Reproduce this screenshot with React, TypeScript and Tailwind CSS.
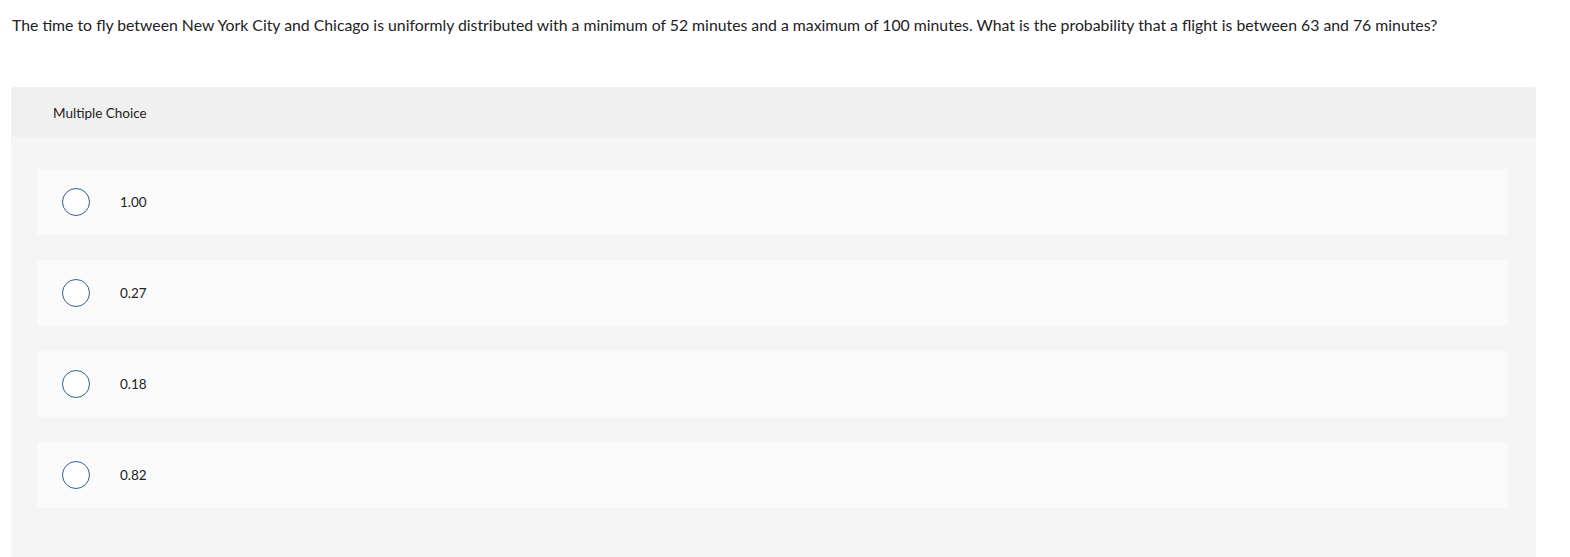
import React from "react";

const options = ["1.00", "0.27", "0.18", "0.82"];

function Option({ label }: { label: string }) {
  return (
    <div className="flex h-[66px] items-center rounded-[3px] bg-[#fafafa] pl-[25px]">
      <span className="h-[28px] w-[28px] rounded-full border-[1.5px] border-[#2f5f8f] bg-white" />
      <span className="ml-[30px] pt-[1px] text-[13.5px] text-[#222]">{label}</span>
    </div>
  );
}

export default function App() {
  return (
    <div className="min-h-[557px] bg-white font-['Lato','Liberation_Sans',sans-serif]">
      <p className="px-[12px] pt-[14px] text-[15.8px] leading-[21px] text-[#222]">
        The time to fly between New York City and Chicago is uniformly distributed with a minimum of 52 minutes and a
        maximum of 100 minutes. What is the probability that a flight is between 63 and 76 minutes?
      </p>
      <div className="mx-[11px] mt-[52px] w-[1525px] rounded-t-[3px] bg-[#f5f5f5]">
        <div className="flex h-[50px] items-center rounded-t-[3px] bg-[#f0f0f0] pl-[42px] pt-[2px] text-[13.5px] text-[#222]">
          Multiple Choice
        </div>
        <div className="flex flex-col gap-[25px] pb-[50px] pl-[26px] pr-[28px] pt-[32px]">
          {options.map((o) => (
            <Option key={o} label={o} />
          ))}
        </div>
      </div>
    </div>
  );
}
